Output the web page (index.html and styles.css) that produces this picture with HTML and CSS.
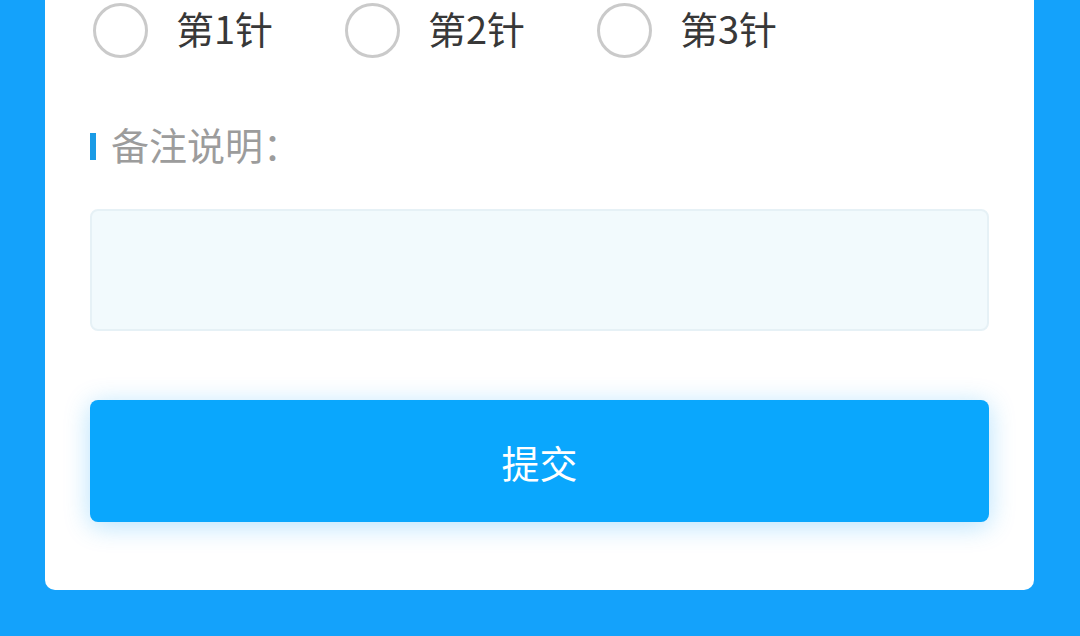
FILE: index.html
```html
<!DOCTYPE html>
<html lang="zh-CN">
<head>
<meta charset="utf-8">
<link rel="stylesheet" href="styles.css">
</head>
<body>
<div class="card">
  <div class="radio-row">
    <label class="radio-item"><span class="radio"></span><span class="radio-text">第1针</span></label>
    <label class="radio-item"><span class="radio"></span><span class="radio-text">第2针</span></label>
    <label class="radio-item"><span class="radio"></span><span class="radio-text">第3针</span></label>
  </div>
  <div class="section-title"><span class="bar"></span><span class="title-text">备注说明：</span></div>
  <div class="textarea"></div>
  <button class="submit">提交</button>
</div>
</body>
</html>
```
FILE: styles.css
```css
html, body {
  margin: 0;
  padding: 0;
}
body {
  width: 1080px;
  height: 636px;
  overflow: hidden;
  background: #14a2fb;
  font-family: "Noto Sans CJK SC", "Noto Sans", sans-serif;
}
.card {
  box-sizing: border-box;
  width: 989px;
  margin: -40px 0 0 45px;
  padding: 43px 45px 68px 45px;
  background: #ffffff;
  border-radius: 10px;
}
.radio-row {
  display: flex;
  padding-left: 3px;
  height: 54px;
  align-items: center;
}
.radio-item {
  display: flex;
  align-items: center;
  width: 252px;
}
.radio {
  box-sizing: border-box;
  width: 55px;
  height: 55px;
  border: 3px solid #cacaca;
  border-radius: 50%;
  flex: none;
}
.radio-text {
  margin-left: 28px;
  padding-bottom: 5px;
  font-size: 38px;
  line-height: 50px;
  color: #383838;
}
.section-title {
  display: flex;
  align-items: center;
  margin-top: 67px;
  height: 44px;
}
.bar {
  width: 6px;
  height: 27px;
  background: #1a9be6;
  flex: none;
}
.title-text {
  margin-left: 15px;
  padding-bottom: 4px;
  font-size: 38px;
  line-height: 40px;
  color: #9c9c9c;
}
.textarea {
  box-sizing: border-box;
  margin-top: 41px;
  height: 122px;
  background: #f2fafd;
  border: 2px solid #e6f1f6;
  border-radius: 8px;
}
.submit {
  display: block;
  width: 100%;
  height: 122px;
  margin-top: 69px;
  border: none;
  border-radius: 8px;
  background: #0aa7fd;
  color: #ffffff;
  font-family: "Noto Sans CJK SC", "Noto Sans", sans-serif;
  font-size: 38px;
  box-shadow: 0 4px 26px rgba(10, 160, 250, 0.3);
}
```
